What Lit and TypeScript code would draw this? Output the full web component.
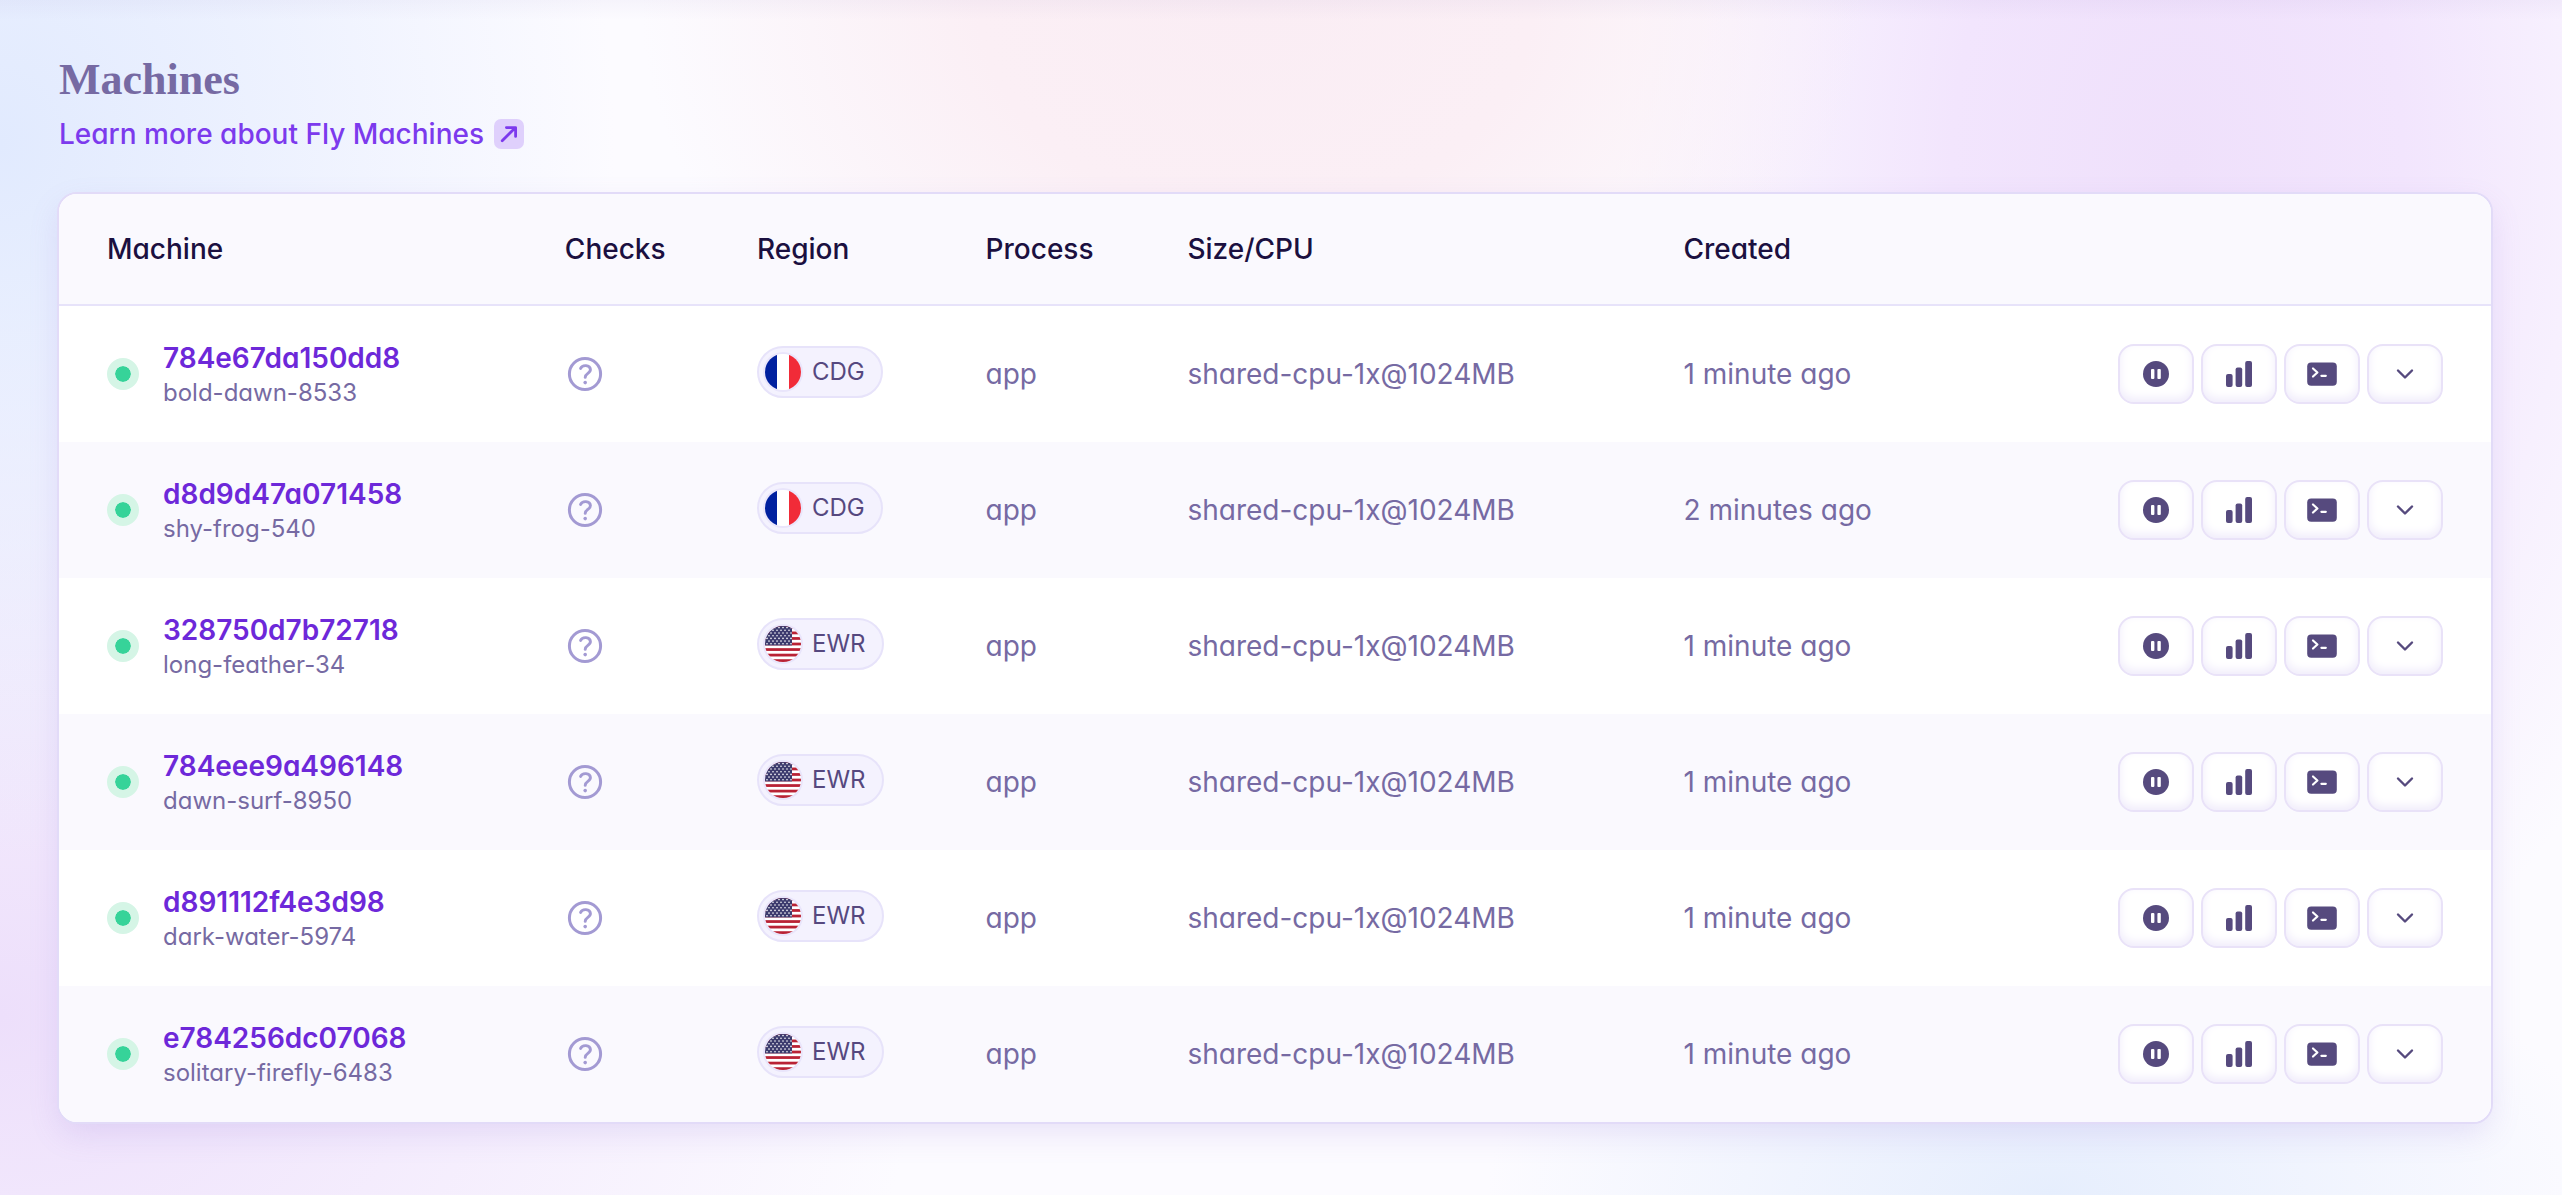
import { LitElement, html, css, svg } from "lit";
import { customElement, property } from "lit/decorators.js";

interface Machine {
  id: string;
  name: string;
  region: "CDG" | "EWR";
  created: string;
}

const MACHINES: Machine[] = [
  { id: "784e67da150dd8", name: "bold-dawn-8533", region: "CDG", created: "1 minute ago" },
  { id: "d8d9d47a071458", name: "shy-frog-540", region: "CDG", created: "2 minutes ago" },
  { id: "328750d7b72718", name: "long-feather-34", region: "EWR", created: "1 minute ago" },
  { id: "784eee9a496148", name: "dawn-surf-8950", region: "EWR", created: "1 minute ago" },
  { id: "d891112f4e3d98", name: "dark-water-5974", region: "EWR", created: "1 minute ago" },
  { id: "e784256dc07068", name: "solitary-firefly-6483", region: "EWR", created: "1 minute ago" },
];

const stars = () => {
  const dots = [];
  for (let row = 0; row < 7; row++) {
    for (let col = 0; col < 7; col++) {
      dots.push(svg`<circle cx=${2 + col * 4 + (row % 2) * 2} cy=${1.6 + row * 2.7} r="0.8" fill="#fff"/>`);
    }
  }
  return dots;
};

const flagFrance = html`<svg class="flag" viewBox="0 0 36 36" aria-hidden="true">
  <rect width="12" height="36" fill="#00209f" /><rect x="12" width="12" height="36" fill="#fff" />
  <rect x="24" width="12" height="36" fill="#f12b38" />
</svg>`;

const flagUsa = html`<svg class="flag" viewBox="0 0 36 36" aria-hidden="true">
  <rect width="36" height="36" fill="#fff" />
  ${[0, 1, 2, 3, 4, 5, 6].map((i) => svg`<rect y=${i * 5.54} width="36" height="2.77" fill="#b92235"/>`)}
  <rect width="27" height="19.4" fill="#3c3b6e" />${stars()}
</svg>`;

@customElement("region-badge")
export class RegionBadge extends LitElement {
  @property() code = "";

  static styles = css`
    :host { display: inline-flex; vertical-align: top; }
    .badge {
      display: inline-flex; align-items: center; gap: 11px;
      height: 52px; box-sizing: border-box; padding: 0 16px 0 6px;
      border: 2px solid #e7e3fa; border-radius: 26px;
      background: #f4f2fe; color: #56487f;
      font-size: 24px; line-height: 32px;
    }
    .flag { width: 36px; height: 36px; border-radius: 50%; display: block; box-shadow: 0 0 0 2px #e9e5fb; }
  `;

  render() {
    return html`<span class="badge">${this.code === "CDG" ? flagFrance : flagUsa}<span>${this.code}</span></span>`;
  }
}

@customElement("machine-actions")
export class MachineActions extends LitElement {
  static styles = css`
    :host { display: flex; justify-content: flex-end; gap: 7px; }
    button {
      width: 76px; height: 60px; box-sizing: border-box; padding: 0;
      display: grid; place-items: center;
      border: 2px solid #e9e2f8; border-radius: 16px; background: #fff;
      box-shadow: inset 0 -4px 10px #f0ecfb;
      color: #564a7e; cursor: pointer;
    }
    svg { width: 32px; height: 32px; display: block; }
  `;

  render() {
    return html`
      <button type="button" aria-label="Pause">
        <svg viewBox="0 0 32 32"><circle cx="16" cy="16" r="13" fill="currentColor" /><rect x="11" y="11" width="3.4" height="10" rx="1" fill="#fff" /><rect x="17.4" y="11" width="3.4" height="10" rx="1" fill="#fff" /></svg>
      </button>
      <button type="button" aria-label="Metrics">
        <svg viewBox="0 0 32 32" fill="currentColor"><rect x="3" y="16" width="6.6" height="13" rx="2" /><rect x="12.6" y="9.4" width="6.6" height="19.6" rx="2" /><rect x="22.2" y="3" width="6.8" height="26" rx="2" /></svg>
      </button>
      <button type="button" aria-label="Console">
        <svg viewBox="0 0 32 32"><rect x="1.2" y="4.4" width="29.6" height="23.4" rx="4" fill="currentColor" /><path d="M7 10.5l4.4 4L7 18.5" fill="none" stroke="#fff" stroke-width="2.2" stroke-linecap="round" stroke-linejoin="round" /><path d="M15.4 17.8h4.4" stroke="#fff" stroke-width="2.2" stroke-linecap="round" /></svg>
      </button>
      <button type="button" aria-label="More actions">
        <svg viewBox="0 0 32 32"><path d="M9 12.5l7 7 7-7" fill="none" stroke="currentColor" stroke-width="2.4" stroke-linecap="round" stroke-linejoin="round" /></svg>
      </button>
    `;
  }
}

@customElement("app-root")
export class AppRoot extends LitElement {
  static styles = css`
    :host {
      display: block; box-sizing: border-box; min-height: 100vh;
      padding: 56px 69px 71px 57px;
      font-family: Inter, "Liberation Sans", sans-serif;
      font-feature-settings: "cv11";
      font-size: 28px; line-height: 40px; color: #766aa3;
      background:
        linear-gradient(#5a3fa00a, #5a3fa000 20px),
        radial-gradient(ellipse 24% 60% at 0% 12%, #e1eafe 0%, #e1eafe00 100%),
        radial-gradient(ellipse 36% 60% at 0% 85%, #eddffb 0%, #eddffb00 100%),
        radial-gradient(ellipse 24% 40% at 49% 0%, #faedf4 0%, #fbeff5 45%, #fbeff500 100%),
        radial-gradient(ellipse 22% 75% at 85% 14%, #efe0fb 0%, #f2e5fd 40%, #f2e5fd00 100%),
        radial-gradient(ellipse 22% 24% at 80% 100%, #e6eefd 0%, #e6eefd00 100%),
        #fcfbff;
    }
    .heading { display: flex; flex-direction: column; align-items: flex-start; gap: 10px; padding-left: 2px; }
    .title {
      margin: 0; font-family: "Liberation Serif", serif; font-size: 44px;
      font-weight: 700; line-height: 48px; color: #766aa3;
    }
    .learn {
      display: inline-flex; align-items: center; gap: 10px;
      color: #7c3aed; font-weight: 500; text-decoration: none;
    }
    .learn svg { width: 30px; height: 30px; }
    .card {
      margin-top: 38px; border: 2px solid #e2dbf8; border-radius: 20px; overflow: hidden;
      background: #fff; box-shadow: 0 12px 32px -4px #8a6bd22e;
    }
    table { width: 100%; border-collapse: separate; border-spacing: 0; table-layout: fixed; }
    .c-machine { width: 20.8%; }
    .c-checks { width: 7.9%; }
    .c-region { width: 9.4%; }
    .c-process { width: 8.3%; }
    .c-size { width: 20.4%; }
    .c-created { width: 14%; }
    th, td { padding: 0; text-align: left; white-space: nowrap; font-weight: 400; box-sizing: border-box; }
    th { height: 112px; background: #faf9fe; color: #1b1040; font-weight: 500; border-bottom: 2px solid #e7e3fa; }
    td { height: 136px; }
    th:first-child, td:first-child { padding-left: 48px; }
    th:last-child, td:last-child { padding-right: 48px; }
    tbody tr:nth-child(even) { background: #faf9fe; }
    .machine { display: flex; align-items: center; gap: 24px; }
    .status { width: 16px; height: 16px; border: 8px solid #d5f5e6; border-radius: 50%; background: #36d399; background-clip: padding-box; }
    .names { display: flex; flex-direction: column; }
    .id { color: #6d28d9; font-weight: 600; line-height: 38px; text-decoration: none; }
    .name { font-size: 24px; line-height: 32px; }
    .help { width: 40px; height: 40px; display: block; color: #a39ad3; }
    region-badge { margin-bottom: 4px; }
  `;

  render() {
    return html`
      <div class="heading">
        <h2 class="title">Machines</h2>
        <a class="learn" href="#machines">Learn more about Fly Machines
          <svg viewBox="0 0 30 30" aria-hidden="true"><rect width="30" height="30" rx="7" fill="#dfd0fc" /><path d="M8.2 21.8L21 9M12.4 8.6H21.6V17.4" fill="none" stroke="#7c3aed" stroke-width="2.8" stroke-linecap="round" stroke-linejoin="round" /></svg>
        </a>
      </div>
      <div class="card">
        <table>
          <colgroup>
            <col class="c-machine" /><col class="c-checks" /><col class="c-region" /><col class="c-process" />
            <col class="c-size" /><col class="c-created" /><col />
          </colgroup>
          <thead>
            <tr><th>Machine</th><th>Checks</th><th>Region</th><th>Process</th><th>Size/CPU</th><th>Created</th><th></th></tr>
          </thead>
          <tbody>
            ${MACHINES.map((m) => html`
              <tr>
                <td><div class="machine"><span class="status"></span><div class="names"><a class="id" href="#${m.id}">${m.id}</a><span class="name">${m.name}</span></div></div></td>
                <td><svg class="help" viewBox="0 0 40 40" role="img" aria-label="No checks" fill="none" stroke="currentColor" stroke-linecap="round" stroke-linejoin="round"><circle cx="20" cy="20" r="15.6" stroke-width="3" /><path d="M15.6 14.4c1.8-4 9.4-3.6 9.8 1c.3 4.2-5.2 3.8-5.2 8" stroke-width="2.9" /><circle cx="20.2" cy="28.6" r="1.8" fill="currentColor" stroke="none" /></svg></td>
                <td><region-badge code=${m.region}></region-badge></td>
                <td>app</td>
                <td>shared-cpu-1x@1024MB</td>
                <td>${m.created}</td>
                <td><machine-actions></machine-actions></td>
              </tr>`)}
          </tbody>
        </table>
      </div>
    `;
  }
}
